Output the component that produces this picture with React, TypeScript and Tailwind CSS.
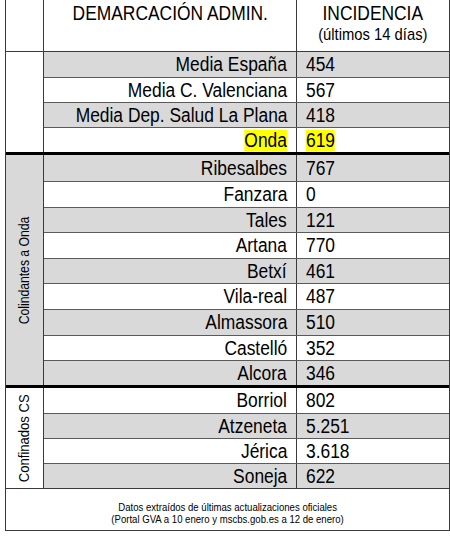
const TXT = 'inline-block whitespace-nowrap scale-x-[0.87]';

type Row = { name: string; value: string; gray: boolean; h: string; hl?: boolean };

const media: Row[] = [
  { name: 'Media España', value: '454', gray: true, h: 'h-[25px]' },
  { name: 'Media C. Valenciana', value: '567', gray: false, h: 'h-[25px]' },
  { name: 'Media Dep. Salud La Plana', value: '418', gray: true, h: 'h-[25px]' },
  { name: 'Onda', value: '619', gray: false, h: 'h-[25px]', hl: true },
];

const colindantes: Row[] = [
  { name: 'Ribesalbes', value: '767', gray: true, h: 'h-[26px]' },
  { name: 'Fanzara', value: '0', gray: false, h: 'h-[26px]' },
  { name: 'Tales', value: '121', gray: true, h: 'h-[25px]' },
  { name: 'Artana', value: '770', gray: false, h: 'h-[26px]' },
  { name: 'Betxí', value: '461', gray: true, h: 'h-[25px]' },
  { name: 'Vila-real', value: '487', gray: false, h: 'h-[26px]' },
  { name: 'Almassora', value: '510', gray: true, h: 'h-[26px]' },
  { name: 'Castelló', value: '352', gray: false, h: 'h-[25px]' },
  { name: 'Alcora', value: '346', gray: true, h: 'h-[25px]' },
];

const confinados: Row[] = [
  { name: 'Borriol', value: '802', gray: false, h: 'h-[25px]' },
  { name: 'Atzeneta', value: '5.251', gray: true, h: 'h-[25px]' },
  { name: 'Jérica', value: '3.618', gray: false, h: 'h-[25px]' },
  { name: 'Soneja', value: '622', gray: true, h: 'h-[25px]' },
];

function DataRow({ row, first }: { row: Row; first: boolean }) {
  return (
    <div
      className={`flex ${row.h} ${first ? '' : 'border-t border-[#5a5a5a]'} ${
        row.gray ? 'bg-[#d9d9d9]' : 'bg-white'
      }`}
    >
      <div className="w-[253px] shrink-0 border-r border-[#3a3a3a] flex items-center justify-end pr-[9px]">
        <span className={`${TXT} origin-right leading-[21px] ${row.hl ? 'bg-[#ffff00]' : ''}`}>{row.name}</span>
      </div>
      <div className="flex-1 flex items-center pl-[9px]">
        <span className={`${TXT} origin-left leading-[21px] ${row.hl ? 'bg-[#ffff00]' : ''}`}>{row.value}</span>
      </div>
    </div>
  );
}

function Group({
  rows,
  label,
  labelSize,
  sideGray,
  bottom,
}: {
  rows: Row[];
  label?: string;
  labelSize?: string;
  sideGray?: boolean;
  bottom: string;
}) {
  return (
    <div className={`flex ${bottom}`}>
      <div
        className={`w-[38px] shrink-0 border-r border-[#3a3a3a] flex items-center justify-center ${
          sideGray ? 'bg-[#d9d9d9]' : 'bg-white'
        }`}
      >
        {label && (
          <span className={`inline-block whitespace-nowrap -rotate-90 scale-x-[0.87] ${labelSize}`}>{label}</span>
        )}
      </div>
      <div className="flex-1 flex flex-col">
        {rows.map((r, i) => (
          <DataRow key={r.name} row={r} first={i === 0} />
        ))}
      </div>
    </div>
  );
}

export default function App() {
  return (
    <div className="w-[450px] h-[536px] bg-white pl-[5px] font-['Liberation_Sans',Arial,sans-serif] text-black text-[20px]">
      <div className="w-[445px] border-l border-r border-b border-[#3a3a3a]">
        {/* Header */}
        <div className="flex h-[52px] border-b border-[#3a3a3a]">
          <div className="w-[38px] shrink-0 border-r border-[#3a3a3a]" />
          <div className="w-[253px] shrink-0 border-r border-[#3a3a3a] flex justify-center pt-[2px]">
            <span className={`${TXT} origin-center leading-[23px]`}>DEMARCACIÓN ADMIN.</span>
          </div>
          <div className="flex-1 flex flex-col items-center pt-[2px]">
            <span className={`${TXT} origin-center leading-[23px]`}>INCIDENCIA</span>
            <span className={`${TXT} origin-center text-[17px] leading-[20px]`}>(últimos 14 días)</span>
          </div>
        </div>

        <Group rows={media} bottom="border-b-[3px] border-black" />
        <Group
          rows={colindantes}
          label="Colindantes a Onda"
          labelSize="text-[14px]"
          sideGray
          bottom="border-b-[3px] border-black"
        />
        <Group rows={confinados} label="Confinados CS" labelSize="text-[15px]" bottom="border-b border-[#3a3a3a]" />

        {/* Footer */}
        <div className="h-[41px] flex flex-col items-center justify-end pb-[5px] text-[11px] leading-[12px]">
          <span className={`${TXT} origin-center`}>Datos extraídos de últimas actualizaciones oficiales</span>
          <span className={`${TXT} origin-center`}>(Portal GVA a 10 enero y mscbs.gob.es a 12 de enero)</span>
        </div>
      </div>
    </div>
  );
}
